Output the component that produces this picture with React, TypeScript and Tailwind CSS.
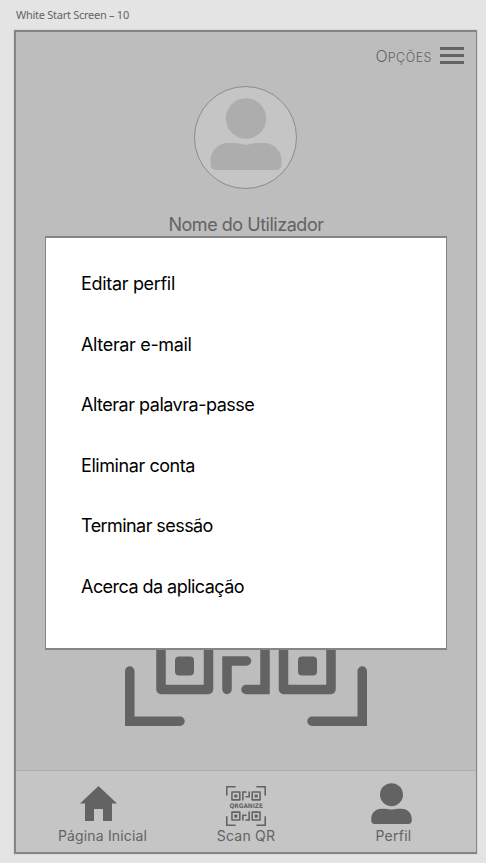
const menu = [
  { label: "Editar perfil", spacing: "tracking-[-0.32px]" },
  { label: "Alterar e-mail", spacing: "tracking-[-0.34px]" },
  { label: "Alterar palavra-passe", spacing: "tracking-[-0.49px]" },
  { label: "Eliminar conta", spacing: "tracking-[-0.43px]" },
  { label: "Terminar sessão", spacing: "tracking-[-0.57px]" },
  { label: "Acerca da aplicação", spacing: "tracking-[-0.54px]" },
];

function QrMark({ className, label }: { className: string; label?: boolean }) {
  return (
    <svg className={className} viewBox="0 0 242 242" fill="none" stroke="#636363" strokeWidth="9.5">
      <g strokeLinecap="round">
        <path d="M4.75 55V4.75H55M187 4.75h50.25V55M4.75 187v50.25H55M187 237.25h50.25V187" />
        <path d="M102 84V36.5h19.5M121 65h19V36.5" />
        <path d="M102 205.5v-28.5h19.5M121 205.5h19V158" />
      </g>
      <g strokeLinejoin="round">
        <path d="M36 36.5h47.5V84H36zM158.5 36.5H206V84h-47.5zM36 158h47.5v47.5H36zM158.5 158H206v47.5h-47.5z" />
      </g>
      <g fill="#636363" stroke="none">
        <rect x="50" y="51" width="19" height="19" rx="4" />
        <rect x="173" y="51" width="19" height="19" rx="4" />
        <rect x="50" y="172.500" width="19" height="19" rx="4" />
        <rect x="173" y="172.500" width="19" height="19" rx="4" />
        {label && (
          <text x="21" y="134" fontSize="38" fontWeight="700" fontFamily="'DejaVu Sans', sans-serif" textLength="202" lengthAdjust="spacingAndGlyphs">
            QRGANIZE
          </text>
        )}
      </g>
    </svg>
  );
}

function Person({ className }: { className: string }) {
  return (
    <svg className={className} viewBox="0 0 72 72" fill="currentColor">
      <circle cx="36" cy="20.500" r="20.200" />
      <path d="M18 45h7q3 0 6 1 5 1.500 10 0 3-1 6-1h7c10 0 17.500 8 17.500 17v4q0 6-6 6H6.500q-6 0-6-6v-4c0-9 7.500-17 17.500-17z" />
    </svg>
  );
}

export default function App() {
  return (
    <div className="h-[863px] w-[486px] overflow-hidden bg-[#e4e4e4] pl-[14px] font-[Inter,sans-serif] text-[#636363]">
      <div className="h-[30px] pt-[7px] pl-[2px] font-['Noto_Sans',sans-serif] text-[11px] leading-4 tracking-[-0.27px] whitespace-nowrap">
        White Start Screen – 10
      </div>
      <main className="relative flex h-[824px] w-[463px] flex-col border-2 border-r-1 border-[#858585] bg-[#bdbdbd] shadow-[0_0_0_1px_#d8d8d8]">
        <header className="flex h-[54px] shrink-0 items-start justify-end pt-[14px] pr-[12px]">
          <span className="mr-[8px] flex items-baseline text-[16px] leading-5 font-light">
            O<span className="text-[12.5px] tracking-[0.5px] uppercase">pções</span>
          </span>
          <span className="mt-[1px] flex w-[24px] flex-col gap-[4px]">
            <i className="h-[3px] bg-[#636363]" />
            <i className="h-[3px] bg-[#636363]" />
            <i className="h-[3px] bg-[#636363]" />
          </span>
        </header>
        <section className="flex h-[684px] shrink-0 flex-col items-center">
          <div className="mr-px flex size-[103px] shrink-0 justify-center rounded-full border border-[#8b8b8b] bg-[#c5c5c5] pt-[11px]">
            <Person className="size-[72px] text-[#adadad]" />
          </div>
          <h1 className="mt-[24px] text-[18px] leading-6 tracking-[-0.47px] whitespace-nowrap">Nome do Utilizador</h1>
          <QrMark className="mt-[247px] size-[242px] shrink-0" />
        </section>
        <nav className="flex flex-1 border-t border-[#adadad] bg-[#c5c5c5]">
          <div className="flex w-[173px] flex-col items-center">
            <svg className="mt-[15px] mr-[8px] h-[35px] w-[37px]" viewBox="0 0 37 35" fill="#636363">
              <path d="M18.500 0 37 17.500h-5V35h-9V23h-9v12H5V17.500H0z" />
            </svg>
            <span className="mt-[5px] text-[14px] leading-5 tracking-[0.15px] whitespace-nowrap">Página Inicial</span>
          </div>
          <div className="flex w-[114px] flex-col items-center">
            <QrMark label className="mt-[15px] size-[40px]" />
            <span className="text-[14px] leading-5 tracking-[0.25px] whitespace-nowrap">Scan QR</span>
          </div>
          <div className="flex w-[173px] flex-col items-center pl-[8px]">
            <Person className="mt-[12px] mr-[4px] size-[41px]" />
            <span className="mt-[2px] text-[14px] leading-5 tracking-[0.25px] whitespace-nowrap">Perfil</span>
          </div>
        </nav>
        <div role="dialog" className="absolute top-[204px] left-[29px] flex h-[414px] w-[402px] flex-col border-x border-y-2 border-[#858585] bg-white pt-[15.500px] pl-[35px] text-black">
          {menu.map((m) => (
            <div key={m.label} className="flex h-[60.500px] items-center text-[18px] whitespace-nowrap">
              <span className={m.spacing}>{m.label}</span>
            </div>
          ))}
        </div>
      </main>
    </div>
  );
}
